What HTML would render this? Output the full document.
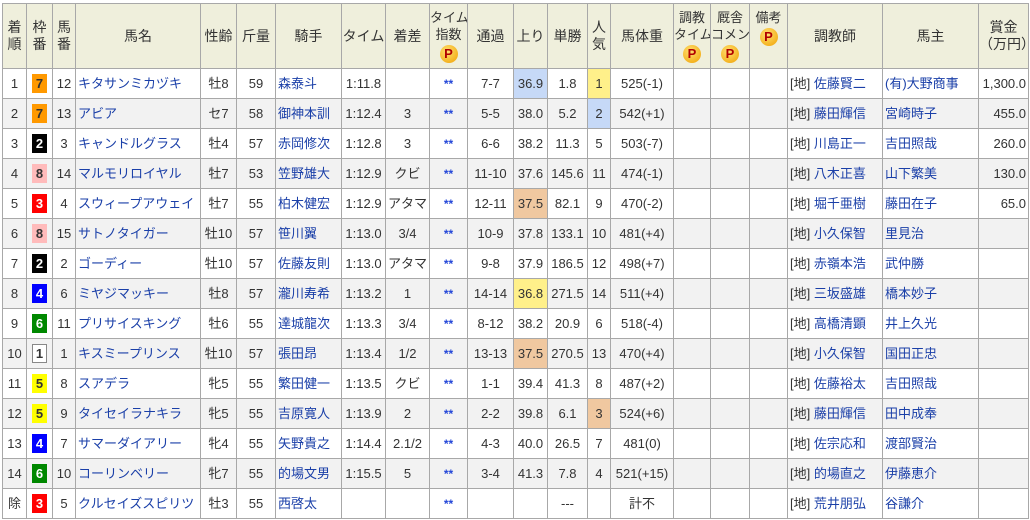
<!DOCTYPE html>
<html><head><meta charset="utf-8"><style>
body{margin:0;background:#fff;font-family:"Liberation Sans","Noto Sans CJK JP",sans-serif;font-size:13px;color:#333}
table{position:absolute;left:2px;top:3px;border-collapse:collapse;table-layout:fixed;width:1026px}
td,th{border:1px solid #a8a8a8;padding:0;text-align:center;white-space:nowrap;overflow:hidden;height:29px;line-height:14px}
th{background:#efefdc;font-weight:normal;height:64px;font-size:14px;line-height:17px;color:#333}
tr:nth-child(odd) td{background:#f2f2f2}
a{color:#1a3fa8;text-decoration:none}
.l{text-align:left;padding-left:2px}
.r{text-align:right;padding-right:2px}
.w{display:inline-block;width:15px;height:19px;line-height:19px;font-weight:bold;color:#fff;font-size:13px}
.f1{background:#fff;color:#333;border:1px solid #888;width:13px;height:17px;line-height:17px}
.f2{background:#000}.f3{background:#f00}.f4{background:#00f}.f5{background:#ff0;color:#333}
.f6{background:#080}.f7{background:#f90;color:#333}.f8{background:#fbb;color:#333}
.st{color:#2447d8;font-weight:bold;font-size:12px}
.p{display:inline-block;width:18px;height:18px;border-radius:50%;background:radial-gradient(circle at 40% 35%,#ffe070,#f0a000);color:#b00000;font-weight:bold;font-size:13px;line-height:18px;margin-top:2px}
.y{background:#fff08a!important}.b{background:#c6d9f7!important}.o{background:#f0c8a0!important}
.sm{font-size:13px;line-height:15px}
</style></head><body>
<table>
<colgroup><col style="width:24px"><col style="width:26px"><col style="width:23px"><col style="width:125px"><col style="width:36px"><col style="width:39px"><col style="width:66px"><col style="width:44px"><col style="width:44px"><col style="width:38px"><col style="width:46px"><col style="width:34px"><col style="width:40px"><col style="width:23px"><col style="width:63px"><col style="width:37px"><col style="width:39px"><col style="width:38px"><col style="width:95px"><col style="width:96px"><col style="width:50px"></colgroup>
<tr><th>着<br>順</th><th>枠<br>番</th><th>馬<br>番</th><th>馬名</th><th>性齢</th><th>斤量</th><th>騎手</th><th>タイム</th><th>着差</th><th><span class="sm">タイム<br>指数</span><br><span class="p">P</span></th><th>通過</th><th>上り</th><th>単勝</th><th>人<br>気</th><th>馬体重</th><th><span class="sm">調教<br>タイム</span><br><span class="p">P</span></th><th><span class="sm">厩舎<br>コメント</span><br><span class="p">P</span></th><th><span class="sm">備考</span><br><span class="p">P</span><br>&nbsp;</th><th>調教師</th><th>馬主</th><th>賞金<br>（万円）</th></tr>
<tr><td>1</td><td><span class="w f7">7</span></td><td>12</td><td class="l"><a>キタサンミカヅキ</a></td><td>牡8</td><td>59</td><td class="l"><a>森泰斗</a></td><td>1:11.8</td><td></td><td class="st">**</td><td>7-7</td><td class="b">36.9</td><td>1.8</td><td class="y">1</td><td>525(-1)</td><td></td><td></td><td></td><td class="l">[地] <a>佐藤賢二</a></td><td class="l"><a>(有)大野商事</a></td><td class="r">1,300.0</td></tr>
<tr><td>2</td><td><span class="w f7">7</span></td><td>13</td><td class="l"><a>アビア</a></td><td>セ7</td><td>58</td><td class="l"><a>御神本訓</a></td><td>1:12.4</td><td>3</td><td class="st">**</td><td>5-5</td><td>38.0</td><td>5.2</td><td class="b">2</td><td>542(+1)</td><td></td><td></td><td></td><td class="l">[地] <a>藤田輝信</a></td><td class="l"><a>宮崎時子</a></td><td class="r">455.0</td></tr>
<tr><td>3</td><td><span class="w f2">2</span></td><td>3</td><td class="l"><a>キャンドルグラス</a></td><td>牡4</td><td>57</td><td class="l"><a>赤岡修次</a></td><td>1:12.8</td><td>3</td><td class="st">**</td><td>6-6</td><td>38.2</td><td>11.3</td><td>5</td><td>503(-7)</td><td></td><td></td><td></td><td class="l">[地] <a>川島正一</a></td><td class="l"><a>吉田照哉</a></td><td class="r">260.0</td></tr>
<tr><td>4</td><td><span class="w f8">8</span></td><td>14</td><td class="l"><a>マルモリロイヤル</a></td><td>牡7</td><td>53</td><td class="l"><a>笠野雄大</a></td><td>1:12.9</td><td>クビ</td><td class="st">**</td><td>11-10</td><td>37.6</td><td>145.6</td><td>11</td><td>474(-1)</td><td></td><td></td><td></td><td class="l">[地] <a>八木正喜</a></td><td class="l"><a>山下繁美</a></td><td class="r">130.0</td></tr>
<tr><td>5</td><td><span class="w f3">3</span></td><td>4</td><td class="l"><a>スウィープアウェイ</a></td><td>牡7</td><td>55</td><td class="l"><a>柏木健宏</a></td><td>1:12.9</td><td>アタマ</td><td class="st">**</td><td>12-11</td><td class="o">37.5</td><td>82.1</td><td>9</td><td>470(-2)</td><td></td><td></td><td></td><td class="l">[地] <a>堀千亜樹</a></td><td class="l"><a>藤田在子</a></td><td class="r">65.0</td></tr>
<tr><td>6</td><td><span class="w f8">8</span></td><td>15</td><td class="l"><a>サトノタイガー</a></td><td>牡10</td><td>57</td><td class="l"><a>笹川翼</a></td><td>1:13.0</td><td>3/4</td><td class="st">**</td><td>10-9</td><td>37.8</td><td>133.1</td><td>10</td><td>481(+4)</td><td></td><td></td><td></td><td class="l">[地] <a>小久保智</a></td><td class="l"><a>里見治</a></td><td></td></tr>
<tr><td>7</td><td><span class="w f2">2</span></td><td>2</td><td class="l"><a>ゴーディー</a></td><td>牡10</td><td>57</td><td class="l"><a>佐藤友則</a></td><td>1:13.0</td><td>アタマ</td><td class="st">**</td><td>9-8</td><td>37.9</td><td>186.5</td><td>12</td><td>498(+7)</td><td></td><td></td><td></td><td class="l">[地] <a>赤嶺本浩</a></td><td class="l"><a>武仲勝</a></td><td></td></tr>
<tr><td>8</td><td><span class="w f4">4</span></td><td>6</td><td class="l"><a>ミヤジマッキー</a></td><td>牡8</td><td>57</td><td class="l"><a>瀧川寿希</a></td><td>1:13.2</td><td>1</td><td class="st">**</td><td>14-14</td><td class="y">36.8</td><td>271.5</td><td>14</td><td>511(+4)</td><td></td><td></td><td></td><td class="l">[地] <a>三坂盛雄</a></td><td class="l"><a>橋本妙子</a></td><td></td></tr>
<tr><td>9</td><td><span class="w f6">6</span></td><td>11</td><td class="l"><a>プリサイスキング</a></td><td>牡6</td><td>55</td><td class="l"><a>達城龍次</a></td><td>1:13.3</td><td>3/4</td><td class="st">**</td><td>8-12</td><td>38.2</td><td>20.9</td><td>6</td><td>518(-4)</td><td></td><td></td><td></td><td class="l">[地] <a>高橋清顕</a></td><td class="l"><a>井上久光</a></td><td></td></tr>
<tr><td>10</td><td><span class="w f1">1</span></td><td>1</td><td class="l"><a>キスミープリンス</a></td><td>牡10</td><td>57</td><td class="l"><a>張田昂</a></td><td>1:13.4</td><td>1/2</td><td class="st">**</td><td>13-13</td><td class="o">37.5</td><td>270.5</td><td>13</td><td>470(+4)</td><td></td><td></td><td></td><td class="l">[地] <a>小久保智</a></td><td class="l"><a>国田正忠</a></td><td></td></tr>
<tr><td>11</td><td><span class="w f5">5</span></td><td>8</td><td class="l"><a>スアデラ</a></td><td>牝5</td><td>55</td><td class="l"><a>繁田健一</a></td><td>1:13.5</td><td>クビ</td><td class="st">**</td><td>1-1</td><td>39.4</td><td>41.3</td><td>8</td><td>487(+2)</td><td></td><td></td><td></td><td class="l">[地] <a>佐藤裕太</a></td><td class="l"><a>吉田照哉</a></td><td></td></tr>
<tr><td>12</td><td><span class="w f5">5</span></td><td>9</td><td class="l"><a>タイセイラナキラ</a></td><td>牝5</td><td>55</td><td class="l"><a>吉原寛人</a></td><td>1:13.9</td><td>2</td><td class="st">**</td><td>2-2</td><td>39.8</td><td>6.1</td><td class="o">3</td><td>524(+6)</td><td></td><td></td><td></td><td class="l">[地] <a>藤田輝信</a></td><td class="l"><a>田中成奉</a></td><td></td></tr>
<tr><td>13</td><td><span class="w f4">4</span></td><td>7</td><td class="l"><a>サマーダイアリー</a></td><td>牝4</td><td>55</td><td class="l"><a>矢野貴之</a></td><td>1:14.4</td><td>2.1/2</td><td class="st">**</td><td>4-3</td><td>40.0</td><td>26.5</td><td>7</td><td>481(0)</td><td></td><td></td><td></td><td class="l">[地] <a>佐宗応和</a></td><td class="l"><a>渡部賢治</a></td><td></td></tr>
<tr><td>14</td><td><span class="w f6">6</span></td><td>10</td><td class="l"><a>コーリンベリー</a></td><td>牝7</td><td>55</td><td class="l"><a>的場文男</a></td><td>1:15.5</td><td>5</td><td class="st">**</td><td>3-4</td><td>41.3</td><td>7.8</td><td>4</td><td>521(+15)</td><td></td><td></td><td></td><td class="l">[地] <a>的場直之</a></td><td class="l"><a>伊藤恵介</a></td><td></td></tr>
<tr><td>除</td><td><span class="w f3">3</span></td><td>5</td><td class="l"><a>クルセイズスピリツ</a></td><td>牡3</td><td>55</td><td class="l"><a>西啓太</a></td><td></td><td></td><td class="st">**</td><td></td><td></td><td>---</td><td></td><td>計不</td><td></td><td></td><td></td><td class="l">[地] <a>荒井朋弘</a></td><td class="l"><a>谷謙介</a></td><td></td></tr>
</table>
</body></html>
